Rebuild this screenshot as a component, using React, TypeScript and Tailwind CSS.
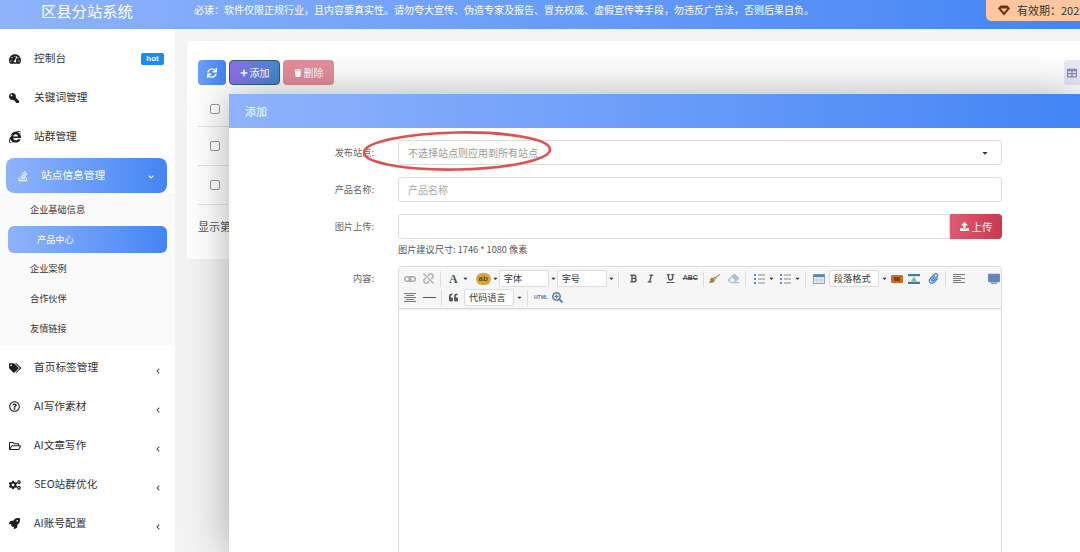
import type { ReactNode } from "react";
import {
  FaTachometerAlt, FaKey, FaInternetExplorer, FaTags, FaRegQuestionCircle, FaRegFolderOpen,
  FaCogs, FaRocket, FaSync, FaPlus, FaTrash, FaUpload, FaStackOverflow, FaChevronLeft,
  FaChevronDown, FaBold, FaItalic, FaUnderline, FaQuoteLeft, FaBroom, FaEraser,
  FaTable, FaPaperclip, FaSearchPlus, FaCaretDown, FaUnlink,
} from "react-icons/fa";

const font = "font-['Noto_Sans_CJK_SC','Noto_Sans',sans-serif]";

const topItems = [
  { icon: <FaTachometerAlt />, label: "控制台", hot: true },
  { icon: <FaKey className="text-[10px] -scale-x-100" />, label: "关键词管理" },
  { icon: <FaInternetExplorer />, label: "站群管理" },
];

const subItems = ["企业基础信息", "产品中心", "企业案例", "合作伙伴", "友情链接"];

const bottomItems = [
  { icon: <FaTags />, label: "首页标签管理" },
  { icon: <FaRegQuestionCircle className="text-[11px]" />, label: "AI写作素材" },
  { icon: <FaRegFolderOpen />, label: "AI文章写作" },
  { icon: <FaCogs />, label: "SEO站群优化" },
  { icon: <FaRocket className="text-[11px]" />, label: "AI账号配置" },
];

const tableRows = ["h-[38px] pt-[2px]", "h-[39px]", "h-[39px]"];

const MenuRow = ({ icon, label, hot, arrow }: { icon: ReactNode; label: string; hot?: boolean; arrow?: boolean }) => (
  <div className="h-[39px] flex items-center relative pl-[9px] text-[#333] text-[10.7px]">
    <span className="w-[25px] text-[12px] text-[#1c1c1c] flex items-center">{icon}</span>
    <span>{label}</span>
    {hot && <span className="ml-auto mr-[11px] w-[23px] h-[12px] rounded-[2px] bg-[#1a8cf0] text-white text-[8px] font-bold flex items-center justify-center font-['Liberation_Sans',sans-serif]">hot</span>}
    {arrow && <FaChevronLeft className="ml-auto mr-[14px] mt-[6px] text-[6px] text-[#444]" />}
  </div>
);

const Sidebar = () => (
  <aside className="w-[175px] shrink-0 bg-white pt-[10px]">
    {topItems.map((item) => <MenuRow key={item.label} {...item} />)}
    <div className="bg-[#fafafa]">
      <div className="bg-white pt-[2px]">
        <div className="mx-[6px] w-[161px] h-[35px] rounded-[8px] bg-gradient-to-r from-[#8fb3fb] to-[#4285f4] flex items-center pl-[11px] text-white text-[10.7px]">
          <FaStackOverflow className="text-[12px] mr-[12px]" />
          <span>站点信息管理</span>
          <FaChevronDown className="ml-auto mr-[13px] mt-[3px] text-[6px]" />
        </div>
      </div>
      <div className="pt-[2px] pb-[2px]">
        {subItems.map((s) => s === "产品中心" ? (
          <div key={s} className="ml-[8px] w-[159px] h-[27px] my-[1px] rounded-[6px] bg-gradient-to-r from-[#8fb3fb] to-[#4285f4] flex items-center pl-[29px] text-white text-[9.2px]">{s}</div>
        ) : (
          <div key={s} className="h-[30px] flex items-center pl-[30px] text-[9.2px] text-[#333]">{s}</div>
        ))}
      </div>
    </div>
    <div className="pt-[2px]">
      {bottomItems.map((item) => <MenuRow key={item.label} {...item} arrow />)}
    </div>
  </aside>
);

const Caret = ({ className }: { className: string }) => <FaCaretDown className={`text-[7px] text-[#333] shrink-0 ${className}`} />;

const ToolSelect = ({ label, className }: { label: string; className: string }) => (
  <div className={`h-[17px] bg-white border border-[#ddd] rounded-[2px] flex items-center pl-[4px] text-[9.2px] text-[#333] shrink-0 ${className}`}>{label}</div>
);

const Sep = ({ className }: { className: string }) => <span className={`w-px h-[16px] bg-[#ddd] shrink-0 ${className}`} />;

const LinkIcon = ({ className }: { className: string }) => (
  <svg className={`shrink-0 ${className}`} width="12" height="12" viewBox="0 0 12 12" fill="none" stroke="#aaa" strokeWidth="1.4">
    <rect x="0.7" y="3.7" width="6.3" height="4.6" rx="2.3" />
    <rect x="5" y="3.7" width="6.3" height="4.6" rx="2.3" />
  </svg>
);

const HighlightIcon = ({ className }: { className: string }) => (
  <span className={`w-[15px] h-[12px] shrink-0 flex items-center justify-center rounded-full bg-[#d9a441] text-[8px] font-bold leading-none text-[#6b4a12] font-['Liberation_Sans',sans-serif] ${className}`}>ab</span>
);

const ListIcon = ({ className }: { className: string }) => (
  <svg className={`shrink-0 ${className}`} width="12" height="12" viewBox="0 0 12 12">
    <path d="M1 1h2v2H1zM1 5h2v2H1zM1 9h2v2H1z" fill="#4a90d9" />
    <path d="M5 2h7M5 6h7M5 10h7" stroke="#8a8a8a" strokeWidth="1" />
  </svg>
);

const TableIcon = ({ className }: { className: string }) => (
  <svg className={`shrink-0 ${className}`} width="12" height="12" viewBox="0 0 12 12">
    <rect x="0.5" y="1.5" width="11" height="9" fill="#e6ebf2" stroke="#8fa6c4" />
    <rect x="0.5" y="1.5" width="11" height="2.5" fill="#5b84b8" />
    <path d="M4 4v6M8 4v6M1 7h10" stroke="#b7c4d6" strokeWidth="0.8" />
  </svg>
);

const ImageIcon = ({ className }: { className: string }) => (
  <svg className={`shrink-0 ${className}`} width="12" height="12" viewBox="0 0 12 12">
    <rect x="0" y="2" width="12" height="8" rx="1" fill="#c8701e" />
    <rect x="3" y="4" width="6" height="4" fill="#8a3f10" />
  </svg>
);

const MediaIcon = ({ className }: { className: string }) => (
  <svg className={`shrink-0 ${className}`} width="12" height="12" viewBox="0 0 12 12">
    <rect x="0" y="1" width="12" height="2.2" fill="#3f7f93" />
    <rect x="0" y="8.8" width="12" height="2.2" fill="#3f7f93" />
    <path d="M3 8.5 6 3.5 9 8.5z" fill="#7fb2c2" />
  </svg>
);

const AlignIcon = ({ className, centered }: { className: string; centered?: boolean }) => (
  <svg className={`shrink-0 ${className}`} width="12" height="12" viewBox="0 0 12 12" stroke="#777" strokeWidth="1">
    <path d={centered ? "M0 1.5h12M2 3.5h8M0 5.5h12M2 7.5h8M0 9.5h12" : "M0 1.5h12M0 3.5h8M0 5.5h12M0 7.5h8M0 9.5h12"} />
  </svg>
);

const MonitorIcon = ({ className }: { className: string }) => (
  <svg className={`shrink-0 ${className}`} width="12" height="12" viewBox="0 0 12 12">
    <rect x="0" y="1" width="12" height="8" rx="1" fill="#5f86c0" stroke="#7a8ca8" strokeWidth="0.6" />
    <rect x="3" y="9.5" width="6" height="1.5" fill="#8a99ad" />
  </svg>
);

const DiamondIcon = () => (
  <svg className="mr-[7px] shrink-0" width="12" height="11" viewBox="0 0 12 11">
    <path d="M2.5 0.5h7L12 3.6 6 10.5 0 3.6z" fill="#6e3315" />
    <path d="M2.6 3.6h6.8L6 7.2z" fill="#fcc7a0" />
  </svg>
);

const Editor = () => (
  <div className="flex-1 min-h-[400px] border border-[#ddd] rounded-t-[4px] overflow-hidden">
    <div className="h-[42px] bg-[#f6f6f6] border-b border-[#d8d8d8] shadow-[0_1px_2px_rgba(0,0,0,0.08)] pt-[2px]">
      <div className="h-[19px] flex items-center text-[11px]">
        <LinkIcon className="ml-[5px]" />
        <FaUnlink className="ml-[7px] text-[#b5b5b5]" />
        <Sep className="ml-[6px]" />
        <span className="ml-[8px] font-['Liberation_Serif',serif] font-bold text-[12px] text-[#555]">A</span>
        <Caret className="ml-[4px]" />
        <HighlightIcon className="ml-[7px]" />
        <Caret className="ml-[1px]" />
        <ToolSelect label="字体" className="ml-0 w-[50px]" />
        <Caret className="ml-[1px]" />
        <ToolSelect label="字号" className="ml-0 w-[50px]" />
        <Caret className="ml-[1px]" />
        <Sep className="ml-[3px]" />
        <FaBold className="ml-[10px] text-[9px] text-[#555]" />
        <FaItalic className="ml-[8px] text-[9px] text-[#555]" />
        <FaUnderline className="ml-[11px] text-[9px] text-[#555]" />
        <span className="ml-[8px] text-[7px] font-bold line-through text-[#555] font-['Liberation_Sans',sans-serif]">ABC</span>
        <Sep className="ml-[5px]" />
        <FaBroom className="ml-[5px] text-[#a9803f]" />
        <FaEraser className="ml-[8px] text-[#a9bfd8]" />
        <Sep className="ml-[6px]" />
        <ListIcon className="ml-[7px]" />
        <Caret className="ml-[3px]" />
        <ListIcon className="ml-[4px]" />
        <Caret className="ml-[3px]" />
        <Sep className="ml-[4px]" />
        <TableIcon className="ml-[7px]" />
        <ToolSelect label="段落格式" className="ml-[4px] w-[50px]" />
        <Caret className="ml-[2px]" />
        <ImageIcon className="ml-[3px]" />
        <MediaIcon className="ml-[5px]" />
        <FaPaperclip className="ml-[8px] text-[#4a7fd0]" />
        <Sep className="ml-[6px]" />
        <AlignIcon className="ml-[7px]" />
        <MonitorIcon className="ml-[23px]" />
      </div>
      <div className="h-[19px] flex items-center text-[11px]">
        <AlignIcon className="ml-[5px]" centered />
        <span className="ml-[7px] w-[13px] h-px bg-[#555]" />
        <Sep className="ml-[5px]" />
        <FaQuoteLeft className="ml-[7px] text-[9px] text-[#555]" />
        <ToolSelect label="代码语言" className="ml-[6px] w-[50px]" />
        <Caret className="ml-[2px]" />
        <Sep className="ml-[4px]" />
        <span className="ml-[6px] text-[5px] font-bold text-[#4a7fd0] font-['Liberation_Sans',sans-serif]">HTML</span>
        <FaSearchPlus className="ml-[4px] text-[#5a7f9a]" />
      </div>
    </div>
  </div>
);

const Field = ({ label, children, className }: { label: string; children: ReactNode; className: string }) => (
  <div className={`flex ${className}`}>
    <label className="w-[145px] shrink-0 text-right text-[9.2px] text-[#666] leading-[25px]">{label}</label>
    <div className="ml-[24px] flex-1 min-w-0">{children}</div>
  </div>
);

const Modal = () => (
  <section className="absolute left-[229px] top-[94px] right-0 bottom-0 bg-white shadow-[0_0_40px_rgba(0,0,0,0.32)] flex flex-col">
    <div className="h-[34px] shrink-0 bg-gradient-to-r from-[#8fb3fb] to-[#4285f4] flex items-center pl-[16px] text-white text-[11px]">添加</div>
    <form className="flex-1 flex flex-col pr-[78px] pt-[12px]">
      <Field label="发布站点:" className="">
        <div className="h-[25px] border border-[#ddd] rounded-[3px] flex items-center justify-between pl-[9px] pr-[12px] text-[10px] text-[#999]">
          <span>不选择站点则应用到所有站点</span>
          <FaCaretDown className="text-[8px] text-[#333]" />
        </div>
      </Field>
      <Field label="产品名称:" className="mt-[12px]">
        <div className="h-[25px] border border-[#ddd] rounded-[3px] flex items-center pl-[9px] text-[10px] text-[#aaa]">产品名称</div>
      </Field>
      <Field label="图片上传:" className="mt-[12px]">
        <div className="flex h-[25px]">
          <div className="flex-1 border border-[#ddd] rounded-l-[3px]" />
          <button type="button" className="w-[52px] rounded-r-[4px] bg-gradient-to-r from-[#e05a70] to-[#c8394f] text-white text-[10.5px] flex items-center justify-center gap-[3px]">
            <FaUpload className="text-[9px]" />上传
          </button>
        </div>
        <p className="mt-[4px] text-[9.2px] text-[#555] leading-[13px]">图片建议尺寸: 1746 * 1080 像素</p>
      </Field>
      <Field label="内容:" className="mt-[10px] flex-1">
        <Editor />
      </Field>
    </form>
    <svg className="absolute left-[130px] top-[34px]" width="200" height="46" viewBox="0 0 200 46" fill="none">
      <ellipse cx="98" cy="23" rx="93" ry="18.5" stroke="#e0504f" strokeWidth="2.6" transform="rotate(-1 98 23)" />
    </svg>
  </section>
);

const App = () => (
  <div className={`w-[1080px] h-[552px] relative overflow-hidden flex flex-col bg-[#f3f3f3] ${font}`}>
    <header className="h-[29px] shrink-0 bg-gradient-to-r from-[#8fb3fb] to-[#4285f4] flex items-start text-white overflow-hidden">
      <div className="w-[194px] pl-[41px] text-[15.3px] leading-[20px] shrink-0">区县分站系统</div>
      <p className="text-[10px] leading-[20px] whitespace-nowrap">必读：软件仅限正规行业，且内容要真实性。请勿夸大宣传、伪造专家及报告、冒充权威、虚假宣传等手段，勿违反广告法，否则后果自负。</p>
      <div className="ml-auto w-[94px] h-[21px] shrink-0 bg-[#fcc7a0] rounded-bl-[5px] flex items-center pl-[12px] text-[#333] text-[11px] whitespace-nowrap overflow-hidden">
        <DiamondIcon />有效期：2022
      </div>
    </header>
    <div className="flex-1 flex min-h-0">
      <Sidebar />
      <main className="flex-1 min-w-0 pl-[12px] pt-[12px]">
        <div className="h-[218px] bg-white rounded-l-[3px] pl-[11px] pt-[19px] relative">
          <div className="flex h-[25px] gap-[3px]">
            <button type="button" className="w-[28px] rounded-[4px] bg-gradient-to-r from-[#6d9df8] to-[#4285f4] text-white text-[10px] flex items-center justify-center"><FaSync /></button>
            <button type="button" className="w-[51px] rounded-[4px] border border-[#2d5f78] bg-gradient-to-r from-[#8b6fe8] to-[#3f8ad0] text-white text-[10px] flex items-center justify-center gap-[2px]"><FaPlus className="text-[8px]" />添加</button>
            <button type="button" className="w-[51px] rounded-[4px] bg-[#e58f9c] text-white text-[10px] flex items-center justify-center gap-[2px]"><FaTrash className="text-[8px]" />删除</button>
            <button type="button" className="ml-auto w-[16px] rounded-l-[4px] bg-[#e8e8f6] text-[#8a8ab8] text-[10px] flex items-center justify-center"><FaTable /></button>
          </div>
          <div className="mt-[4px]">
            {tableRows.map((row) => (
              <div key={row} className={`flex items-center border-b border-[#e5e5e5] pl-[12px] ${row}`}>
                <span className="w-[10px] h-[10px] border border-[#999] rounded-[2px] bg-white" />
              </div>
            ))}
          </div>
          <p className="mt-[13px] text-[11px] text-[#555]">显示第</p>
        </div>
      </main>
    </div>
    <Modal />
  </div>
);

export default App;
